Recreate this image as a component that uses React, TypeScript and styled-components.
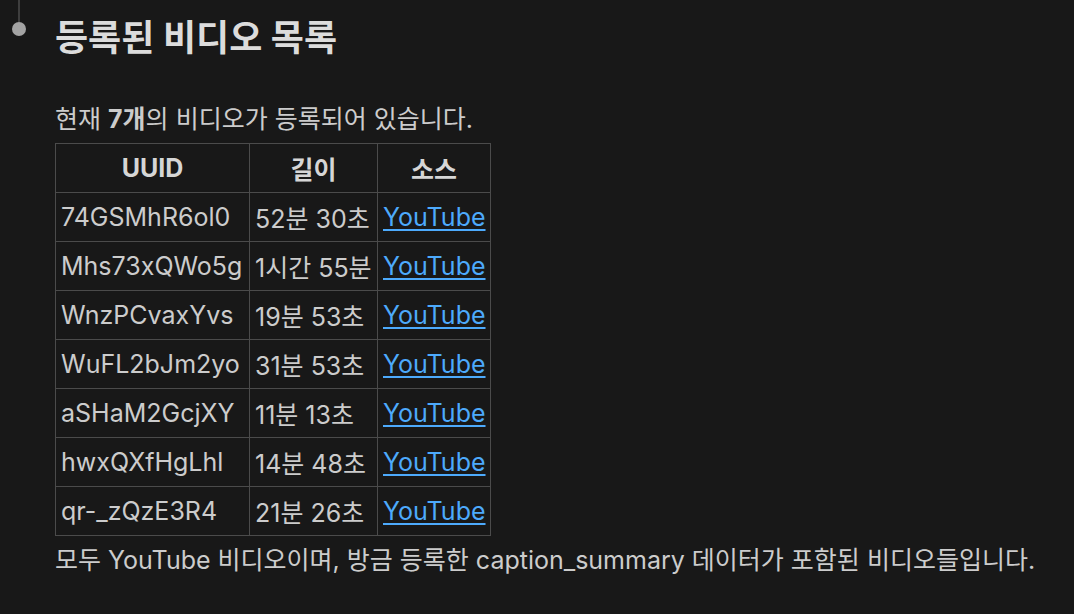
import React from "react";
import styled, { createGlobalStyle } from "styled-components";

const Global = createGlobalStyle`
  html, body {
    margin: 0;
    padding: 0;
    background: #181818;
  }
  body {
    font-family: "Inter", "Noto Sans CJK KR", sans-serif;
    color: #cccccc;
  }
`;

const Page = styled.div`
  display: flex;
  min-height: 614px;
  background: #181818;
`;

const Gutter = styled.div`
  width: 38px;
  flex: none;
  display: flex;
  flex-direction: column;
  align-items: center;
`;

const Line = styled.div`
  width: 2px;
  height: 22px;
  background: #3e3e3e;
`;

const Dot = styled.div`
  width: 14px;
  height: 14px;
  border-radius: 50%;
  background: #a3a3a3;
`;

const Content = styled.div`
  margin-left: 17px;
  padding-top: 15px;
  display: flex;
  flex-direction: column;
`;

const Heading = styled.h2`
  margin: 0;
  font-size: 36px;
  line-height: 46px;
  font-weight: 700;
  color: #dcdcdc;
  white-space: nowrap;
`;

const Para = styled.p<{ $top?: number }>`
  margin: ${(p) => p.$top ?? 0}px 0 0 0;
  font-size: 25px;
  line-height: 34px;
  color: #cccccc;
  white-space: nowrap;
`;

const Table = styled.table`
  border-collapse: collapse;
  table-layout: fixed;
  width: 435px;
  font-size: 25px;
  margin-top: 7px;
`;

const Th = styled.th<{ $w: number }>`
  width: ${(p) => p.$w}px;
  height: 49px;
  padding: 0 5px;
  border: 1px solid #4b4b4b;
  font-weight: 700;
  color: #d6d6d6;
  text-align: center;
  box-sizing: border-box;
`;

const Td = styled.td`
  height: 49px;
  padding: 0 5px;
  border: 1px solid #4b4b4b;
  color: #cccccc;
  white-space: nowrap;
  overflow: hidden;
  box-sizing: border-box;
`;

const Link = styled.a`
  color: #4daafc;
  text-decoration: underline;
  text-underline-offset: 3px;
`;

const rows = [
  ["74GSMhR6ol0", "52분 30초"],
  ["Mhs73xQWo5g", "1시간 55분"],
  ["WnzPCvaxYvs", "19분 53초"],
  ["WuFL2bJm2yo", "31분 53초"],
  ["aSHaM2GcjXY", "11분 13초"],
  ["hwxQXfHgLhl", "14분 48초"],
  ["qr-_zQzE3R4", "21분 26초"],
];

export default function App() {
  return (
    <>
      <Global />
      <Page>
        <Gutter>
          <Line />
          <Dot />
        </Gutter>
        <Content>
          <Heading>등록된 비디오 목록</Heading>
          <Para $top={41}>
            현재 <b>7개</b>의 비디오가 등록되어 있습니다.
          </Para>
          <Table>
            <thead>
              <tr>
                <Th $w={194}>UUID</Th>
                <Th $w={128}>길이</Th>
                <Th $w={113}>소스</Th>
              </tr>
            </thead>
            <tbody>
              {rows.map(([id, len]) => (
                <tr key={id}>
                  <Td>{id}</Td>
                  <Td>{len}</Td>
                  <Td>
                    <Link href="#">YouTube</Link>
                  </Td>
                </tr>
              ))}
            </tbody>
          </Table>
          <Para $top={7}>
            모두 YouTube 비디오이며, 방금 등록한 caption_summary 데이터가 포함된 비디오들입니다.
          </Para>
        </Content>
      </Page>
    </>
  );
}
